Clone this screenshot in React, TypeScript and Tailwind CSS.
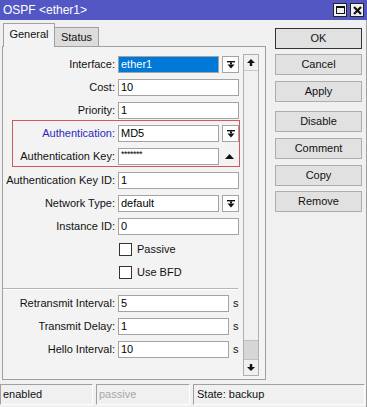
import React from 'react';

const DropIcon = () => (
  <svg width="8" height="8" viewBox="0 0 8 8">
    <rect x="0" y="0" width="8" height="1.4" fill="#111" />
    <rect x="3" y="1.4" width="2" height="2" fill="#111" />
    <polygon points="0.5,3.4 7.5,3.4 4,7.6" fill="#111" />
  </svg>
);

const ArrowUp = () => (
  <svg width="8" height="7" viewBox="0 0 8 7">
    <polygon points="0,4 8,4 4,0" fill="#111" />
    <rect x="2.8" y="4" width="2.4" height="3" fill="#111" />
  </svg>
);

const ArrowDown = () => (
  <svg width="8" height="7" viewBox="0 0 8 7">
    <polygon points="0,3 8,3 4,7" fill="#111" />
    <rect x="2.8" y="0" width="2.4" height="3" fill="#111" />
  </svg>
);

const TriUp = () => (
  <svg width="9" height="5" viewBox="0 0 9 5">
    <polygon points="0,5 9,5 4.5,0" fill="#111" />
  </svg>
);

function Row({
  label,
  children,
  labelCls = 'w-[112px]',
  className = '',
}: {
  label: string;
  children: React.ReactNode;
  labelCls?: string;
  className?: string;
}) {
  return (
    <div className={`flex items-center h-[17px] ${className}`}>
      <div className={`${labelCls} text-right whitespace-nowrap leading-none`}>{label}</div>
      <div className="ml-[3px] flex items-center h-[17px]">{children}</div>
    </div>
  );
}

function Field({ value, cls = 'w-[121px]', selected = false }: { value: React.ReactNode; cls?: string; selected?: boolean }) {
  return (
    <div
      className={`${cls} h-[17px] border border-[#a3a3a3] flex items-center pl-[2px] leading-none ${
        selected ? 'bg-[#0078d7] text-white' : 'bg-white text-black'
      }`}
    >
      {value}
    </div>
  );
}

function DropBtn() {
  return (
    <div className="ml-[3px] w-[17px] h-[17px] border border-[#a3a3a3] bg-white flex items-center justify-center">
      <DropIcon />
    </div>
  );
}

function Check({ label, className = '' }: { label: string; className?: string }) {
  return (
    <div className={`flex items-center h-[17px] ${className}`}>
      <div className="w-[112px]" />
      <div className="ml-[4px] w-[13px] h-[13px] border border-[#333] bg-white" />
      <span className="ml-[5px] leading-none">{label}</span>
    </div>
  );
}

function Btn({ label, className = '', ok = false }: { label: string; className?: string; ok?: boolean }) {
  return (
    <div
      className={`w-[87px] h-[21px] flex items-center justify-center bg-[#e1e1e1] border leading-none ${
        ok ? 'border-[#333]' : 'border-[#adadad]'
      } ${className}`}
    >
      {label}
    </div>
  );
}

export default function App() {
  return (
    <div className="w-[367px] h-[407px] bg-[#f0f0f0] overflow-hidden font-['Liberation_Sans',Arial,sans-serif] text-[11px] text-[#111]">
      {/* Title bar */}
      <div className="h-[20px] bg-[#5257c4] flex items-center justify-between pl-[3px] pr-[3px]">
        <span className="text-white text-[12px] leading-none">OSPF &lt;ether1&gt;</span>
        <div className="flex items-center gap-[3px]">
          <div className="w-[14px] h-[14px] bg-[#f0f0f0] border border-[#222] flex items-center justify-center">
            <div className="w-[9px] h-[8px] border border-[#111] border-t-2" />
          </div>
          <div className="w-[14px] h-[14px] bg-[#f0f0f0] border border-[#222] flex items-center justify-center">
            <svg width="9" height="9" viewBox="0 0 9 9">
              <path d="M1 1 L8 8 M8 1 L1 8" stroke="#111" strokeWidth="2.2" />
            </svg>
          </div>
        </div>
      </div>

      <div className="border-r border-[#a0a0a0] h-[387px]">
        {/* Main */}
        <div className="flex">
          {/* Left column */}
          <div className="ml-[2px] w-[264px] flex flex-col">
            {/* Tabs */}
            <div className="h-[26px] flex items-end ml-[1px]">
              <div className="relative z-10 -mb-px w-[52px] h-[24px] border border-b-0 border-[#a0a0a0] bg-[#f3f3f3] flex items-center justify-center pb-[3px] leading-none">
                General
              </div>
              <div className="w-[44px] h-[19px] border border-l-0 border-b-0 border-[#a0a0a0] bg-[#dcdcdc] flex items-center justify-center leading-none">
                Status
              </div>
            </div>
            {/* Panel */}
            <div className="h-[334px] border border-[#a0a0a0] bg-[#f3f3f3] flex">
              <div className="w-[240px] flex flex-col">
                <Row label="Interface:" className="mt-[9px]">
                  <Field value="ether1" cls="w-[101px]" selected />
                  <DropBtn />
                </Row>
                <Row label="Cost:" className="mt-[6px]">
                  <Field value="10" />
                </Row>
                <Row label="Priority:" className="mt-[6px]">
                  <Field value="1" />
                </Row>
                <div className="mt-[1px] ml-[9px] w-[228px] border border-[#d05a5a] pt-[4px] pb-[1px]">
                  <Row label="Authentication:" labelCls="w-[102px] text-[#2b2bb8]">
                    <Field value="MD5" cls="w-[101px]" />
                    <DropBtn />
                  </Row>
                  <Row label="Authentication Key:" labelCls="w-[102px]" className="mt-[6px]">
                    <Field
                      value={<span className="text-[9px] leading-none -mt-[4px] tracking-[-0.5px]">*******</span>}
                      cls="w-[101px]"
                    />
                    <div className="w-[20px] flex justify-center">
                      <TriUp />
                    </div>
                  </Row>
                </div>
                <Row label="Authentication Key ID:" className="mt-[5px]">
                  <Field value="1" />
                </Row>
                <Row label="Network Type:" className="mt-[6px]">
                  <Field value="default" cls="w-[101px]" />
                  <DropBtn />
                </Row>
                <Row label="Instance ID:" className="mt-[6px]">
                  <Field value="0" />
                </Row>
                <Check label="Passive" className="mt-[6px]" />
                <Check label="Use BFD" className="mt-[6px]" />
                <div className="mt-[7px] w-[235px] h-[2px] border-t border-[#b5b5b5] border-b border-b-white" />
                <Row label="Retransmit Interval:" className="mt-[5px]">
                  <Field value="5" cls="w-[111px]" />
                  <span className="ml-[4px] leading-none">s</span>
                </Row>
                <Row label="Transmit Delay:" className="mt-[6px]">
                  <Field value="1" cls="w-[111px]" />
                  <span className="ml-[4px] leading-none">s</span>
                </Row>
                <Row label="Hello Interval:" className="mt-[6px]">
                  <Field value="10" cls="w-[111px]" />
                  <span className="ml-[4px] leading-none">s</span>
                </Row>
              </div>
              {/* Scrollbar */}
              <div className="mt-[7px] w-[16px] h-[322px] border border-[#b0b0b0] bg-[#f0f0f0] flex flex-col">
                <div className="h-[16px] border-b border-[#c8c8c8] flex items-center justify-center">
                  <ArrowUp />
                </div>
                <div className="flex-1" />
                <div className="h-[19px] bg-[#d6d6d6] border-t border-[#c0c0c0]" />
                <div className="h-[16px] border-t border-[#c0c0c0] flex items-center justify-center">
                  <ArrowDown />
                </div>
              </div>
            </div>
          </div>
          {/* Right buttons */}
          <div className="ml-[9px] pt-[8px] flex flex-col">
            <Btn label="OK" ok />
            <Btn label="Cancel" className="mt-[5px]" />
            <Btn label="Apply" className="mt-[6px]" />
            <Btn label="Disable" className="mt-[9px]" />
            <Btn label="Comment" className="mt-[6px]" />
            <Btn label="Copy" className="mt-[6px]" />
            <Btn label="Remove" className="mt-[5px]" />
          </div>
        </div>

        {/* Status bar */}
        <div className="mt-[4px] flex h-[21px]">
          <div className="w-[93px] border-t border-l border-[#a0a0a0] border-r-white border-b-white border-r border-b flex items-center pl-[2px] leading-none">
            enabled
          </div>
          <div className="ml-[3px] w-[94px] border-t border-l border-[#a0a0a0] border-r-white border-b-white border-r border-b flex items-center pl-[2px] leading-none text-[#a8a8a8]">
            passive
          </div>
          <div className="ml-[3px] w-[172px] border-t border-l border-[#a0a0a0] border-r-white border-b-white border-r border-b flex items-center pl-[3px] leading-none">
            State: backup
          </div>
        </div>
      </div>
    </div>
  );
}
